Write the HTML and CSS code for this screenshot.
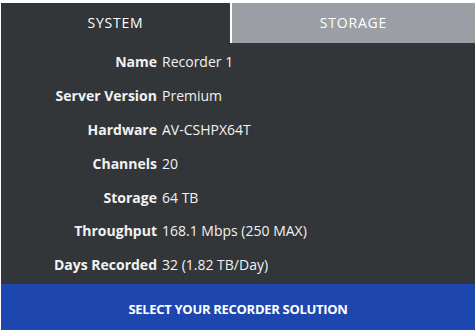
FILE: index.html
```html
<!DOCTYPE html>
<html lang="en">
<head>
    <meta charset="UTF-8">
    <meta name="viewport" content="width=device-width, initial-scale=1.0">
    <title>Recorder</title>
    <link rel="stylesheet" href="styles.css">
</head>
<body>
    <div class="panel">
        <div class="tabs">
            <a href="#" class="tab active">System</a>
            <a href="#" class="tab">Storage</a>
        </div>

        <div class="specs">
            <div class="label">Name</div><div class="value">Recorder 1</div>
            <div class="label">Server Version</div><div class="value">Premium</div>
            <div class="label">Hardware</div><div class="value">AV-CSHPX64T</div>
            <div class="label">Channels</div><div class="value">20</div>
            <div class="label">Storage</div><div class="value">64 TB</div>
            <div class="label">Throughput</div><div class="value">168.1 Mbps (250 MAX)</div>
            <div class="label">Days Recorded</div><div class="value">32 (1.82 TB/Day)</div>
        </div>

        <a href="#" class="select-btn">Select your recorder solution</a>
    </div>
</body>
</html>
```

FILE: styles.css
```css
body {
    font-family: "Open Sans", Arial, sans-serif;
    margin: 0;
    padding: 0;
    background: #fff;
}
.panel {
    margin: 3px 1px 0 1px;
    background-color: #323638;
    color: #f2f2f2;
}
.tabs {
    display: grid;
    grid-template-columns: 229px 1fr;
    height: 40px;
}
.tab {
    display: flex;
    align-items: center;
    justify-content: center;
    padding-bottom: 1px;
    text-transform: uppercase;
    text-decoration: none;
    color: #fff;
    font-size: 14px;
    letter-spacing: 0.8px;
}
.tab + .tab {
    background-color: #9b9fa5;
    border-left: 2px solid #fff;
}
.specs {
    display: grid;
    grid-template-columns: 156px 1fr;
    column-gap: 5px;
    grid-auto-rows: 33.8px;
    align-items: center;
    padding-top: 2px;
    padding-bottom: 2px;
    font-size: 14px;
}
.label {
    text-align: right;
    font-weight: 700;
}
.select-btn {
    display: flex;
    align-items: center;
    justify-content: center;
    height: 47px;
    padding-top: 3px;
    box-sizing: border-box;
    background-color: #1d47ae;
    color: #fff;
    text-decoration: none;
    text-transform: uppercase;
    font-weight: 700;
    font-size: 13px;
    letter-spacing: -0.3px;
}
```
